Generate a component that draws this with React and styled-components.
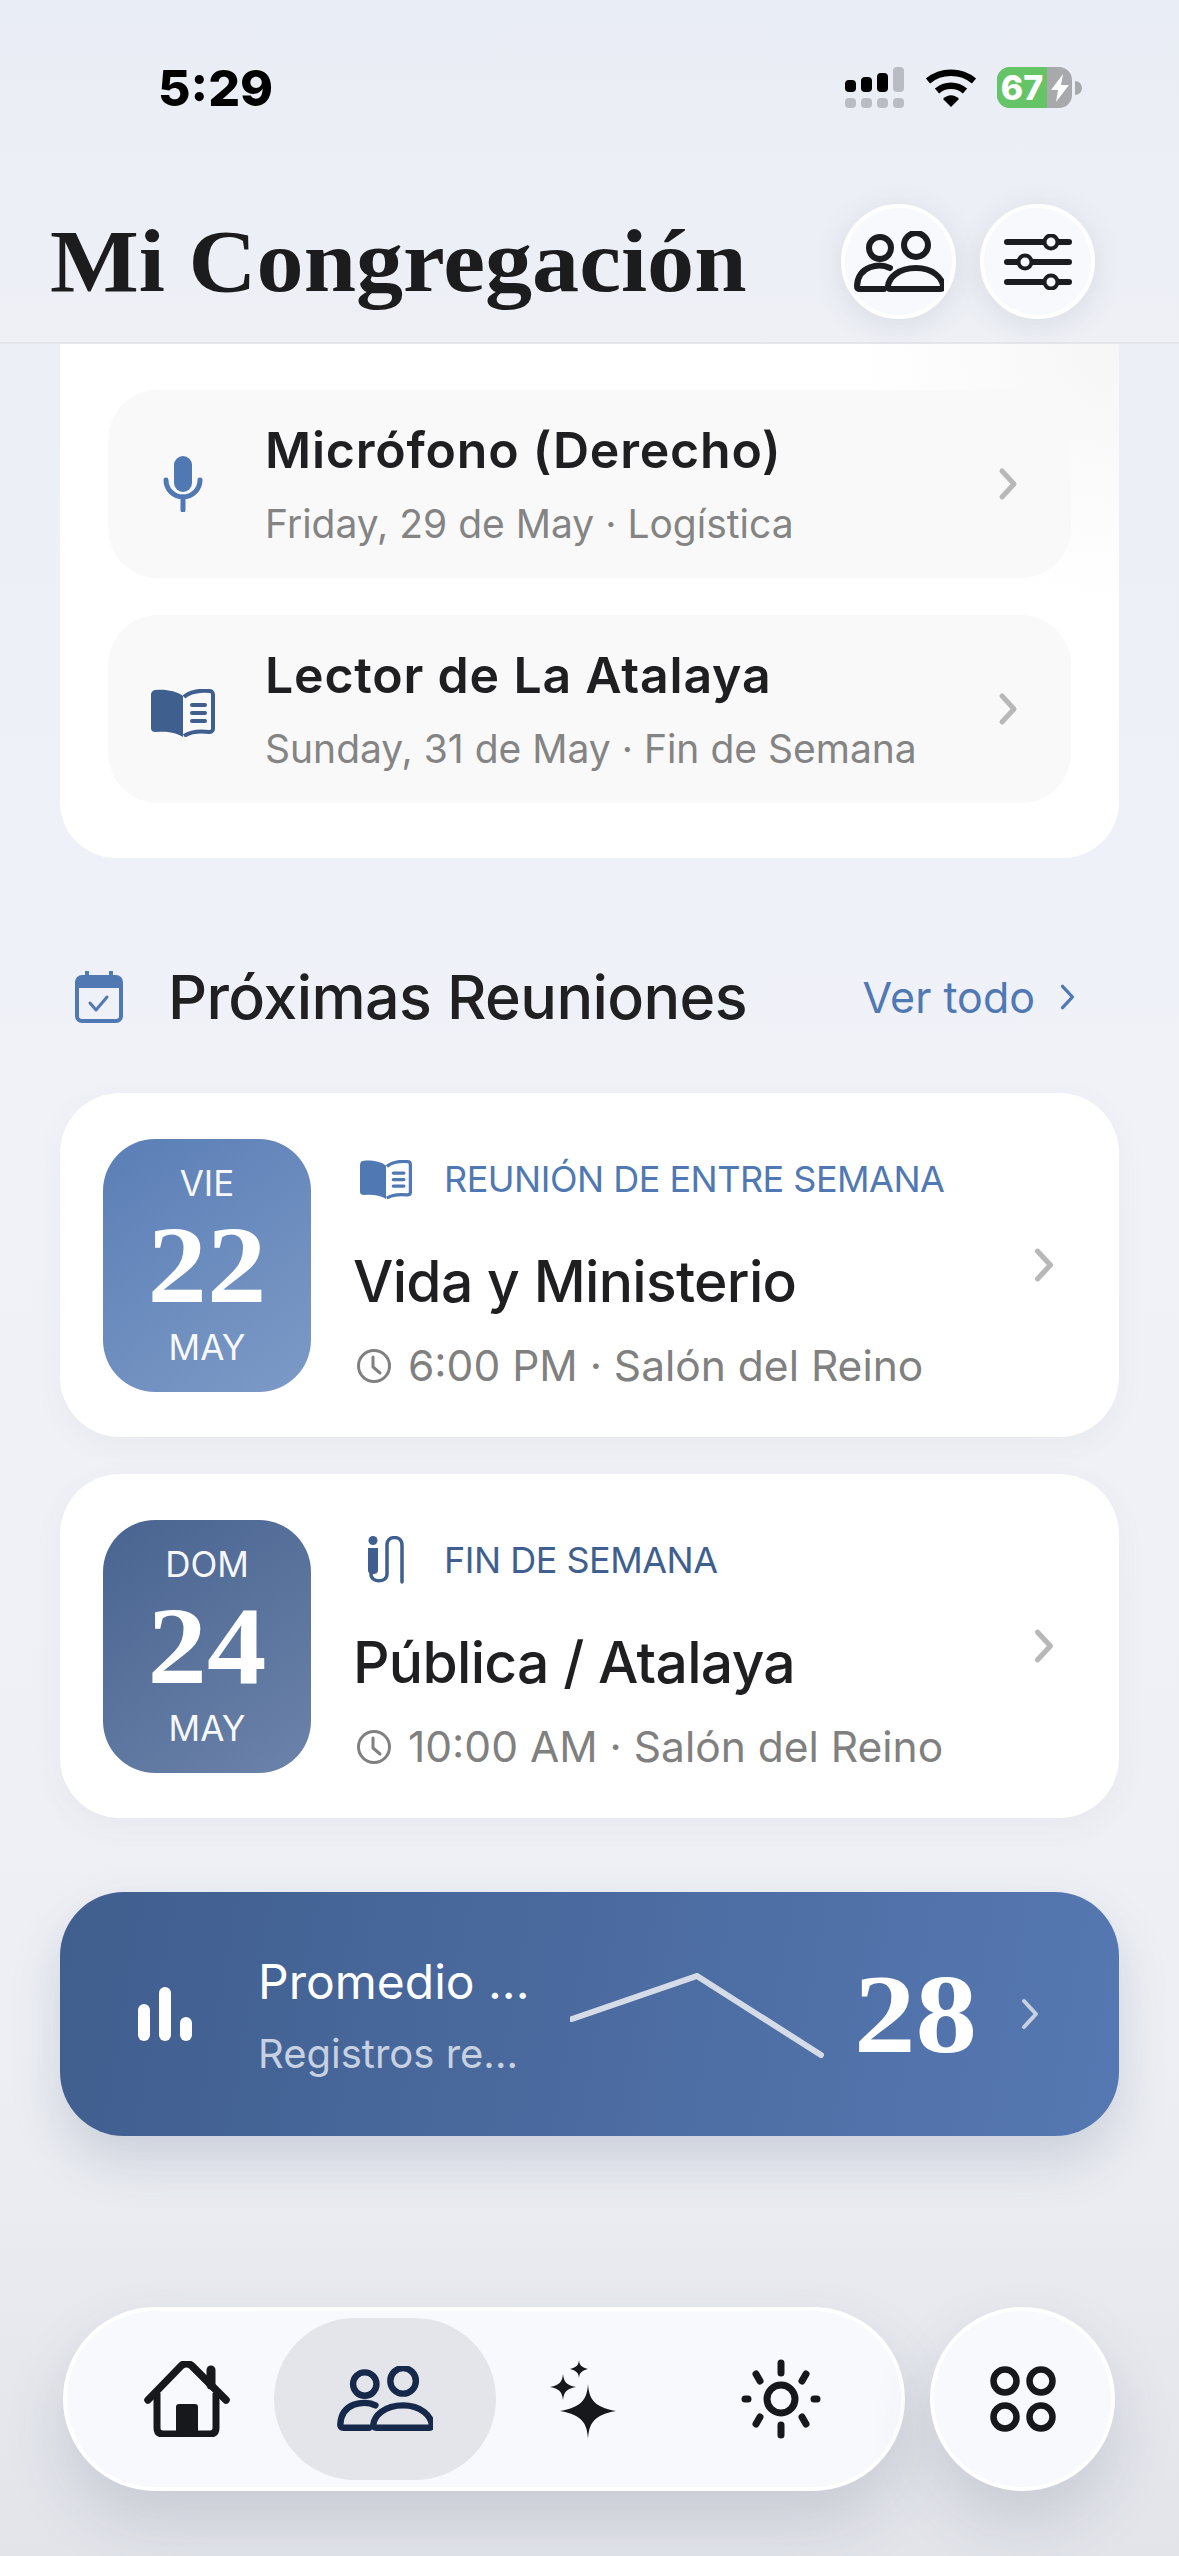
import React from "react";
import styled, { createGlobalStyle } from "styled-components";

const UI = '"Inter", "Noto Sans", "Liberation Sans", sans-serif';
const SERIF = '"Liberation Serif", "DejaVu Serif", serif';

const Global = createGlobalStyle`
  html, body { margin: 0; padding: 0; }
  body { font-family: ${UI}; background: #eef0f6; }
`;

const Chevron = ({ color = "#b8b8b8", w = 20, h = 34, sw = 5 }) => (
  <svg width={w} height={h} viewBox="0 0 20 34" fill="none">
    <path d="M4 4 L16 17 L4 30" stroke={color} strokeWidth={sw} strokeLinecap="round" strokeLinejoin="round" />
  </svg>
);

const Mic = () => (
  <svg width="40" height="56" viewBox="0 0 40 56" fill="none">
    <rect x="11" y="0" width="18" height="36" rx="9" fill="#5078b3" />
    <path d="M3 24 A17 17 0 0 0 37 24" stroke="#5078b3" strokeWidth="5" strokeLinecap="round" />
    <path d="M20 41 V54" stroke="#5078b3" strokeWidth="5" strokeLinecap="round" />
  </svg>
);

const Book = ({ color, w = 64, h = 48 }) => (
  <svg width={w} height={h} viewBox="0 0 64 48" fill="none">
    <path d="M32 7 C26 2 14 0 5 1 C2 1 0 3 0 6 V39 C0 42 2 43 5 43 C14 42 25 43 32 48 Z" fill={color} />
    <path d="M33 8 C38 3 49 1 59 2 C61 2 62 4 62 6 V40 C62 42 60 43 58 43 C49 42 39 43 33 47" stroke={color} strokeWidth="4" />
    <path d="M41 16 H54 M41 24 H54 M41 32 H54" stroke={color} strokeWidth="4" strokeLinecap="round" />
  </svg>
);

const Mics = ({ color }) => (
  <svg width="38" height="48" viewBox="0 0 38 48" fill="none">
    <circle cx="6" cy="4.5" r="4.5" fill={color} />
    <path d="M1 12 H11 V34 C11 37 9 38 6 38 C3 38 1 37 1 34 Z" fill={color} />
    <path d="M4 32 V38 C4 47 20 47 20 38 V9 C20 -1 35 -1 35 9 V46" stroke={color} strokeWidth="3.5" strokeLinecap="round" />
  </svg>
);

const Calendar = () => (
  <svg width="48" height="52" viewBox="0 0 48 52" fill="none">
    <rect x="2" y="6" width="44" height="44" rx="5" stroke="#5078b3" strokeWidth="4" />
    <path d="M2 11 C2 8 4 6 7 6 H41 C44 6 46 8 46 11 V17 H2 Z" fill="#5078b3" />
    <path d="M12 1 V8 M36 1 V8" stroke="#5078b3" strokeWidth="4" strokeLinecap="round" />
    <path d="M15 32 L21 39 L32 26" stroke="#5078b3" strokeWidth="3" strokeLinecap="round" strokeLinejoin="round" />
  </svg>
);

const Clock = () => (
  <svg width="36" height="36" viewBox="0 0 36 36" fill="none">
    <circle cx="18" cy="18" r="15.5" stroke="#808080" strokeWidth="3" />
    <path d="M17 9 V19 L24 25" stroke="#808080" strokeWidth="3" strokeLinecap="round" strokeLinejoin="round" />
  </svg>
);

const People = ({ color = "#1b1c20", w = 90, h = 62 }) => (
  <svg width={w} height={h} viewBox="0 0 90 62" fill="none">
    <circle cx="26" cy="17" r="11" stroke={color} strokeWidth="6" />
    <circle cx="62" cy="14" r="12" stroke={color} strokeWidth="6" />
    <path d="M36 37 C26 32 4 34 3 55 C3 57 4 58 6 58 H30" stroke={color} strokeWidth="6" strokeLinecap="round" />
    <path d="M62 37 C44 37 35 47 34 55 C34 57 35 58 37 58 H86 C88 58 89 57 89 55 C88 47 79 37 62 37 Z" stroke={color} strokeWidth="6" strokeLinejoin="round" />
  </svg>
);

const Sliders = () => (
  <svg width="68" height="56" viewBox="0 0 68 56" fill="none">
    <path d="M3 8 H65 M3 28 H65 M3 48 H65" stroke="#1b1c20" strokeWidth="6" strokeLinecap="round" />
    <circle cx="47" cy="8" r="6.5" fill="#f8f9fd" stroke="#1b1c20" strokeWidth="4" />
    <circle cx="21" cy="28" r="6.5" fill="#f8f9fd" stroke="#1b1c20" strokeWidth="4" />
    <circle cx="47" cy="48" r="6.5" fill="#f8f9fd" stroke="#1b1c20" strokeWidth="4" />
  </svg>
);

const Home = () => (
  <svg width="86" height="76" viewBox="0 0 86 76" fill="none">
    <path d="M4 39 L37 5 C40 2 45 2 48 5 L82 39" stroke="#17181c" strokeWidth="7.5" strokeLinecap="round" strokeLinejoin="round" />
    <path d="M13 32 V67 C13 71 15 73 19 73 H66 C70 73 72 71 72 67 V32" stroke="#17181c" strokeWidth="7" />
    <path d="M67 24 V9" stroke="#17181c" strokeWidth="9" strokeLinecap="round" />
    <rect x="32" y="43" width="22" height="30" rx="3" fill="#17181c" />
  </svg>
);

const Sparkle = () => (
  <svg width="66" height="79" viewBox="0 0 66 79" fill="#17181c">
    <path d="M38 24 C39 38 43 47 66 51 C43 55 39 64 38 79 C37 64 33 55 10 51 C33 47 37 38 38 24 Z" />
    <path d="M13 14 C14 22 16 25 26 27 C16 29 14 32 13 40 C12 32 10 29 0 27 C10 25 12 22 13 14 Z" />
    <path d="M29 0 C29.5 5 31 7 38 9 C31 11 29.5 13 29 18 C28.5 13 27 11 20 9 C27 7 28.5 5 29 0 Z" />
  </svg>
);

const Sun = () => (
  <svg width="80" height="80" viewBox="0 0 80 80" fill="none" stroke="#17181c" strokeLinecap="round">
    <circle cx="40" cy="40" r="14" strokeWidth="7" />
    <path d="M40 4 V14 M40 66 V76 M4 40 H7 M73 40 H76 M15 15 L19 22 M65 15 L61 22 M15 65 L19 58 M65 65 L61 58" strokeWidth="7" />
  </svg>
);

const Grid = () => (
  <svg width="66" height="66" viewBox="0 0 66 66" fill="none" stroke="#17181c" strokeWidth="6.5">
    <circle cx="15" cy="15" r="11.5" />
    <circle cx="51" cy="15" r="11.5" />
    <circle cx="15" cy="51" r="11.5" />
    <circle cx="51" cy="51" r="11.5" />
  </svg>
);

const Bars = () => (
  <svg width="54" height="54" viewBox="0 0 54 54" fill="#fff">
    <rect x="0" y="17" width="12" height="37" rx="6" />
    <rect x="21" y="0" width="12" height="54" rx="6" />
    <rect x="42" y="30" width="12" height="24" rx="6" />
  </svg>
);

const Page = styled.div`
  width: 1179px;
  height: 2556px;
  overflow: hidden;
  display: flex;
  flex-direction: column;
  background: linear-gradient(180deg, #e9edf5 0%, #f0f2f8 45%, #edeff4 80%, #e2e4ea 100%);
`;

const Header = styled.header`
  height: 344px;
  box-sizing: border-box;
  border-bottom: 2px solid #e4e6ec;
  background: linear-gradient(180deg, #e9edf5 0%, #eef0f6 100%);
  display: flex;
  flex-direction: column;
  flex-shrink: 0;
`;

const StatusBar = styled.div`
  height: 204px;
  display: flex;
  align-items: flex-start;
  justify-content: space-between;
  padding: 66px 97px 0 158px;
  box-sizing: border-box;
`;

const Clocktime = styled.span`
  font-size: 50px;
  font-weight: 800;
  line-height: 44px;
  color: #000;
`;

const StatusIcons = styled.div`
  display: flex;
  align-items: center;
  gap: 20px;
  padding-top: 1px;
`;

const Battery = styled.div`
  width: 75px;
  height: 41px;
  border-radius: 13px;
  overflow: hidden;
  display: flex;
  background: #a7a9ad;
`;

const BatteryFill = styled.div`
  width: 50px;
  background: #65c466;
  color: #fff;
  font-size: 34px;
  font-weight: 800;
  line-height: 41px;
  text-align: center;
  font-family: ${UI};
`;

const BatteryBolt = styled.div`
  flex: 1;
  display: flex;
  align-items: center;
  justify-content: center;
`;

const BatteryNub = styled.div`
  width: 7px;
  height: 14px;
  margin-left: -17px;
  background: #a7a9ad;
  border-radius: 0 7px 7px 0;
`;

const TitleRow = styled.div`
  display: flex;
  align-items: center;
  padding: 0 84px 0 50px;
`;

const Title = styled.h1`
  margin: 0;
  flex: 1;
  font-family: ${SERIF};
  font-size: 89px;
  font-weight: 700;
  color: #1c1c1e;
  line-height: 115px;
  white-space: nowrap;
  transform: scaleX(1.058);
  transform-origin: left center;
`;

const RoundButton = styled.button`
  width: 115px;
  height: 115px;
  margin-left: 24px;
  padding: 0;
  border-radius: 50%;
  border: 4px solid #fff;
  background: #f8f9fd;
  display: flex;
  flex-shrink: 0;
  align-items: center;
  justify-content: center;
  box-shadow: 0 6px 30px rgba(70, 80, 100, 0.12);
  box-sizing: border-box;
`;

const Content = styled.main`
  padding: 0 60px;
  display: flex;
  flex-direction: column;
`;

const AssignCard = styled.section`
  background: radial-gradient(circle at 100% 0, #f6f6f7 0, #fff 260px);
  border-radius: 0 0 56px 56px;
  padding: 46px 48px 55px;
  display: flex;
  flex-direction: column;
  gap: 37px;
`;

const AssignRow = styled.div`
  height: 188px;
  border-radius: 50px;
  background: #f9f9fa;
  display: flex;
  align-items: center;
  padding: 0 53px 0 0;
`;

const IconSlot = styled.div`
  width: 150px;
  margin-right: 7px;
  flex-shrink: 0;
  display: flex;
  justify-content: center;
  margin-top: ${(p) => p.$drop}px;
`;

const AssignText = styled.div`
  flex: 1;
`;

const AssignTitle = styled.div`
  font-size: 50px;
  font-weight: 600;
  line-height: 64px;
  color: #1f1f21;
  letter-spacing: 0.8px;
`;

const AssignSub = styled.div`
  margin-top: 16px;
  font-size: 39px;
  line-height: 52px;
  color: #848484;
`;

const SectionHead = styled.div`
  display: flex;
  align-items: center;
  height: 56px;
  padding: 111px 0 68px 15px;
`;

const SectionTitle = styled.h2`
  margin: 0 0 0 45px;
  flex: 1;
  font-size: 61px;
  font-weight: 500;
  letter-spacing: -0.6px;
  color: #202022;
`;

const SeeAll = styled.a`
  display: flex;
  align-items: center;
  gap: 24px;
  font-size: 43px;
  color: #5078b3;
  padding-right: 43px;
`;

const MeetingList = styled.div`
  display: flex;
  flex-direction: column;
  gap: 37px;
`;

const MeetingCard = styled.article`
  height: 344px;
  border-radius: 60px;
  background: #fff;
  display: flex;
  align-items: center;
  padding: 0 64px 0 43px;
  box-shadow: 0 8px 30px rgba(90, 100, 120, 0.05);
`;

const DateBox = styled.div`
  width: 208px;
  height: 253px;
  border-radius: 52px;
  flex-shrink: 0;
  background: linear-gradient(145deg, ${(p) => p.$from}, ${(p) => p.$to});
  color: #fff;
  display: flex;
  flex-direction: column;
  align-items: center;
  justify-content: center;
`;

const DateLabel = styled.div`
  font-size: 35px;
  line-height: 44px;
  opacity: 0.95;
`;

const DateNum = styled.div`
  font-family: ${SERIF};
  font-weight: 700;
  font-size: 110px;
  line-height: 120px;
  transform: scaleX(1.08);
`;

const MeetingBody = styled.div`
  flex: 1;
  margin-left: 42px;
  padding-top: 16px;
`;

const KindRow = styled.div`
  display: flex;
  align-items: center;
  height: 50px;
`;

const KindIcon = styled.div`
  width: 66px;
  margin-right: 25px;
  flex-shrink: 0;
  display: flex;
  justify-content: center;
`;

const Kind = styled.span`
  font-size: 36px;
  letter-spacing: -0.5px;
  color: ${(p) => p.$color};
`;

const MeetingTitle = styled.div`
  margin-top: 43px;
  font-size: 57px;
  font-weight: 500;
  line-height: 70px;
  letter-spacing: -0.7px;
  color: #1f1f21;
`;

const MeetingMeta = styled.div`
  margin-top: 23px;
  display: flex;
  align-items: center;
  gap: 16px;
  font-size: 42.5px;
  line-height: 52px;
  color: #808080;
  padding-left: 3px;
`;

const StatCard = styled.section`
  height: 244px;
  margin-top: 74px;
  border-radius: 64px;
  background: linear-gradient(100deg, #405e8e 0%, #5678b2 100%);
  box-shadow: 0 24px 50px rgba(60, 75, 110, 0.18);
  display: flex;
  align-items: center;
  padding: 0 78px 0 78px;
`;

const StatText = styled.div`
  width: 312px;
  margin-left: 66px;
  flex-shrink: 0;
`;

const StatTitle = styled.div`
  font-size: 48px;
  line-height: 66px;
  color: #fff;
`;

const StatSub = styled.div`
  margin-top: 13px;
  font-size: 40px;
  line-height: 52px;
  color: #c7d1e2;
`;

const Spark = styled.svg`
  flex-shrink: 0;
  margin-top: 3px;
`;

const StatNum = styled.div`
  margin-left: 30px;
  font-family: ${SERIF};
  font-size: 112px;
  font-weight: 700;
  color: #fff;
  transform: scaleX(1.1);
  transform-origin: left center;
`;

const StatChevron = styled.div`
  margin-left: 54px;
  display: flex;
`;

const NavWrap = styled.nav`
  margin-top: 171px;
  padding: 0 64px 0 63px;
  display: flex;
  justify-content: space-between;
`;

const NavPill = styled.div`
  width: 842px;
  height: 184px;
  box-sizing: border-box;
  border: 4px solid #fff;
  border-radius: 92px;
  background: #f8f9fd;
  display: flex;
  align-items: center;
  padding-left: 21px;
  box-shadow: 0 30px 60px rgba(70, 80, 100, 0.17);
`;

const NavItem = styled.div`
  width: 222px;
  height: 162px;
  margin: 0 -12px;
  border-radius: 81px;
  flex-shrink: 0;
  display: flex;
  align-items: center;
  justify-content: center;
  background: ${(p) => (p.$active ? "#e3e5ea" : "transparent")};
`;

const NavCircle = styled.div`
  width: 185px;
  height: 184px;
  box-sizing: border-box;
  border: 4px solid #fff;
  border-radius: 50%;
  background: #f8f9fd;
  display: flex;
  align-items: center;
  justify-content: center;
  box-shadow: 0 30px 60px rgba(70, 80, 100, 0.17);
`;

const assignments = [
  { icon: <Mic />, drop: 0, title: "Micrófono (Derecho)", sub: "Friday, 29 de May · Logística" },
  { icon: <Book color="#3f5f8f" />, drop: 8, title: "Lector de La Atalaya", sub: "Sunday, 31 de May · Fin de Semana" },
];

const meetings = [
  {
    day: "VIE", num: "22", from: "#5a7eb6", to: "#7d9ac6", color: "#5078b3",
    icon: <Book color="#5078b3" w={52} h={39} />,
    kind: "REUNIÓN DE ENTRE SEMANA", title: "Vida y Ministerio", meta: "6:00 PM · Salón del Reino",
  },
  {
    day: "DOM", num: "24", from: "#486490", to: "#6c83aa", color: "#3f5f8f",
    icon: <Mics color="#3f5f8f" />,
    kind: "FIN DE SEMANA", title: "Pública / Atalaya", meta: "10:00 AM · Salón del Reino",
  },
];

const App = () => {
  return (
    <Page>
      <Global />
      <Header>
        <StatusBar>
          <Clocktime>5:29</Clocktime>
          <StatusIcons>
            <svg width="60" height="41" viewBox="0 0 60 41">
              <rect x="0" y="13" width="11" height="12" rx="4" fill="#000" />
              <rect x="16" y="10" width="11" height="15" rx="4" fill="#000" />
              <rect x="32" y="6" width="11" height="19" rx="4" fill="#000" />
              <rect x="48" y="0" width="11" height="25" rx="4" fill="#b9bcc2" />
              <rect x="0" y="31" width="11" height="10" rx="4" fill="#b9bcc2" />
              <rect x="16" y="31" width="11" height="10" rx="4" fill="#b9bcc2" />
              <rect x="32" y="31" width="11" height="10" rx="4" fill="#b9bcc2" />
              <rect x="48" y="31" width="11" height="10" rx="4" fill="#b9bcc2" />
            </svg>
            <svg width="52" height="38" viewBox="0 0 52 38" fill="none">
              <path d="M3 12 C16 1 36 1 49 12" stroke="#000" strokeWidth="6.5" />
              <path d="M12 22 C20 15 32 15 40 22" stroke="#000" strokeWidth="6.5" />
              <path d="M18 30 C23 25 29 25 34 30 L26 38 Z" fill="#000" />
            </svg>
            <Battery>
              <BatteryFill>67</BatteryFill>
              <BatteryBolt>
                <svg width="18" height="28" viewBox="0 0 18 28" fill="#fff">
                  <path d="M12 0 L0 16 H7 L5 28 L18 11 H10 Z" />
                </svg>
              </BatteryBolt>
            </Battery>
            <BatteryNub />
          </StatusIcons>
        </StatusBar>
        <TitleRow>
          <Title>Mi Congregación</Title>
          <RoundButton><People /></RoundButton>
          <RoundButton><Sliders /></RoundButton>
        </TitleRow>
      </Header>

      <Content>
        <AssignCard>
          {assignments.map((a) => (
            <AssignRow key={a.title}>
              <IconSlot $drop={a.drop}>{a.icon}</IconSlot>
              <AssignText>
                <AssignTitle>{a.title}</AssignTitle>
                <AssignSub>{a.sub}</AssignSub>
              </AssignText>
              <Chevron />
            </AssignRow>
          ))}
        </AssignCard>

        <SectionHead>
          <Calendar />
          <SectionTitle>Próximas Reuniones</SectionTitle>
          <SeeAll>Ver todo <Chevron color="#5078b3" w={17} h={28} sw={4} /></SeeAll>
        </SectionHead>

        <MeetingList>
          {meetings.map((m) => (
            <MeetingCard key={m.num}>
              <DateBox $from={m.from} $to={m.to}>
                <DateLabel>{m.day}</DateLabel>
                <DateNum>{m.num}</DateNum>
                <DateLabel>MAY</DateLabel>
              </DateBox>
              <MeetingBody>
                <KindRow>
                  <KindIcon>{m.icon}</KindIcon>
                  <Kind $color={m.color}>{m.kind}</Kind>
                </KindRow>
                <MeetingTitle>{m.title}</MeetingTitle>
                <MeetingMeta><Clock />{m.meta}</MeetingMeta>
              </MeetingBody>
              <Chevron w={22} h={36} />
            </MeetingCard>
          ))}
        </MeetingList>

        <StatCard>
          <Bars />
          <StatText>
            <StatTitle>Promedio ...</StatTitle>
            <StatSub>Registros re...</StatSub>
          </StatText>
          <Spark width="254" height="86" viewBox="0 0 254 86" fill="none">
            <path d="M2 46 L127 3 L251 82" stroke="#d5dce8" strokeWidth="6" strokeLinecap="round" />
          </Spark>
          <StatNum>28</StatNum>
          <StatChevron><Chevron color="#c7d1e2" w={20} h={34} sw={4} /></StatChevron>
        </StatCard>
      </Content>

      <NavWrap>
        <NavPill>
          <NavItem><Home /></NavItem>
          <NavItem $active><People color="#16294a" w={96} h={66} /></NavItem>
          <NavItem><Sparkle /></NavItem>
          <NavItem><Sun /></NavItem>
        </NavPill>
        <NavCircle><Grid /></NavCircle>
      </NavWrap>
    </Page>
  );
};

export default App;
